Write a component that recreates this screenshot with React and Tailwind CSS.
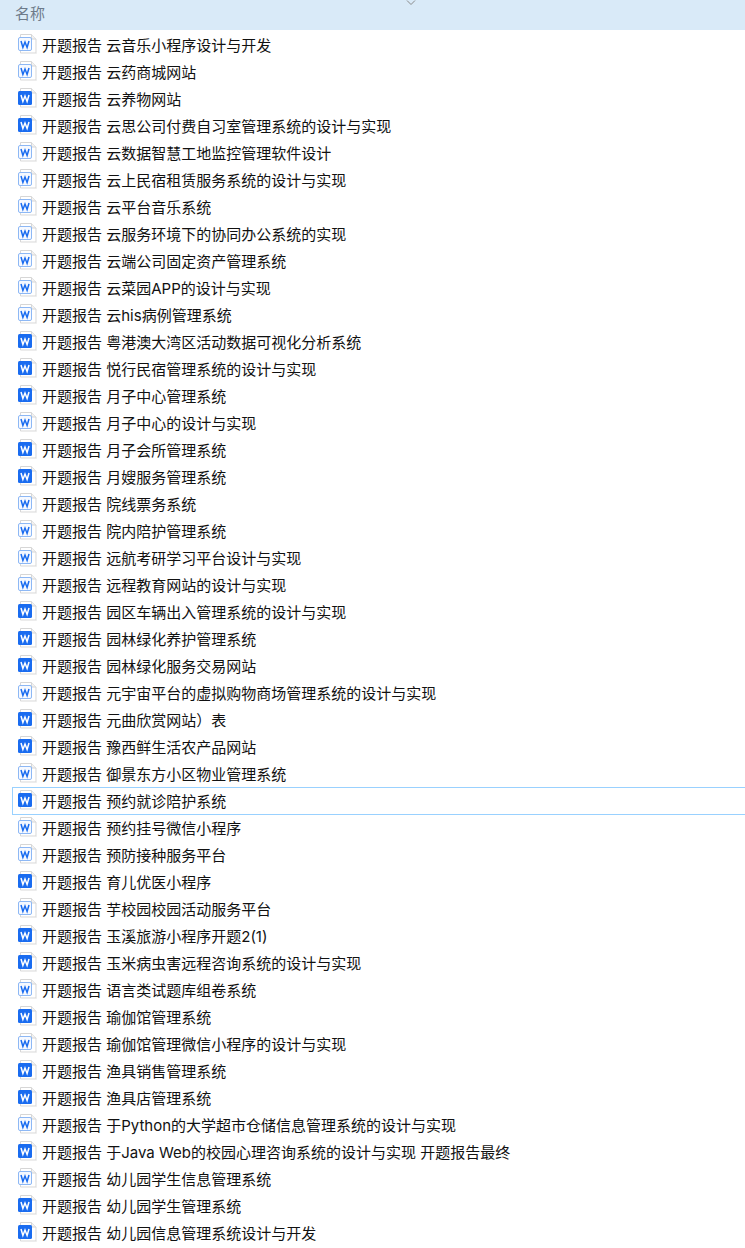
const files = [
  ["云音乐小程序设计与开发", 0],
  ["云药商城网站", 0],
  ["云养物网站", 1],
  ["云思公司付费自习室管理系统的设计与实现", 1],
  ["云数据智慧工地监控管理软件设计", 0],
  ["云上民宿租赁服务系统的设计与实现", 0],
  ["云平台音乐系统", 0],
  ["云服务环境下的协同办公系统的实现", 0],
  ["云端公司固定资产管理系统", 0],
  ["云菜园APP的设计与实现", 0],
  ["云his病例管理系统", 0],
  ["粤港澳大湾区活动数据可视化分析系统", 1],
  ["悦行民宿管理系统的设计与实现", 1],
  ["月子中心管理系统", 1],
  ["月子中心的设计与实现", 0],
  ["月子会所管理系统", 1],
  ["月嫂服务管理系统", 1],
  ["院线票务系统", 0],
  ["院内陪护管理系统", 0],
  ["远航考研学习平台设计与实现", 0],
  ["远程教育网站的设计与实现", 0],
  ["园区车辆出入管理系统的设计与实现", 1],
  ["园林绿化养护管理系统", 1],
  ["园林绿化服务交易网站", 1],
  ["元宇宙平台的虚拟购物商场管理系统的设计与实现", 0],
  ["元曲欣赏网站）表", 1],
  ["豫西鲜生活农产品网站", 1],
  ["御景东方小区物业管理系统", 0],
  ["预约就诊陪护系统", 1],
  ["预约挂号微信小程序", 0],
  ["预防接种服务平台", 0],
  ["育儿优医小程序", 1],
  ["芋校园校园活动服务平台", 0],
  ["玉溪旅游小程序开题2(1)", 1],
  ["玉米病虫害远程咨询系统的设计与实现", 1],
  ["语言类试题库组卷系统", 0],
  ["瑜伽馆管理系统", 1],
  ["瑜伽馆管理微信小程序的设计与实现", 0],
  ["渔具销售管理系统", 1],
  ["渔具店管理系统", 1],
  ["于Python的大学超市仓储信息管理系统的设计与实现", 0],
  ["于Java Web的校园心理咨询系统的设计与实现 开题报告最终", 1],
  ["幼儿园学生信息管理系统", 0],
  ["幼儿园学生管理系统", 1],
  ["幼儿园信息管理系统设计与开发", 1],
];

const SELECTED = 28;

function WordIcon({ solid }) {
  return (
    <svg width="20" height="22" viewBox="0 0 20 22" className="mt-px shrink-0">
      {/* page */}
      <path d="M2.5 1.5H13.5L18 6V20H2.5Z" fill="#fff" stroke="#d6d6d6" />
      <path d="M13.5 1.5V6H18" fill="#f2f2f2" stroke="#d6d6d6" />
      <path d="M3 20.5H18.5V7" fill="none" stroke="#ececec" />
      {/* badge */}
      {solid ? (
        <rect x="0" y="4" width="14" height="14" rx="1.5" fill="#1a6cf0" />
      ) : (
        <rect x="0.5" y="4.5" width="13" height="13" rx="1.5" fill="#f6f9ff" stroke="#8db8f5" />
      )}
      <path
        d="M3 8L4.9 14.5L7 9L9.1 14.5L11 8"
        fill="none"
        stroke={solid ? "#fff" : "#1a6cf0"}
        strokeWidth="1.5"
      />
    </svg>
  );
}

export default function App() {
  return (
    <div className="min-h-screen bg-white font-['Inter','Noto_Sans_CJK_SC',sans-serif] text-[15px] text-[#111]">
      <div className="relative flex h-[30px] items-center bg-[#d9eaf8] pb-px pl-[15px] text-[#6d7a8a]">
        名称
        <svg width="10" height="6" viewBox="0 0 10 6" className="absolute left-[406px] top-0">
          <path d="M1 0.5L5 4.5L9 0.5" fill="none" stroke="#8a8a8a" />
        </svg>
      </div>
      <ul className="pt-px">
        {files.map(([name, solid], i) => (
          <li
            key={name}
            className={`ml-3 flex items-start gap-[4px] pl-[5px] ${
              i === SELECTED
                ? "-mb-px h-[28px] border border-r-0 border-[#99d1ff]"
                : "h-[27px] border border-transparent"
            }`}
          >
            <WordIcon solid={solid === 1} />
            <span className="mt-[6px] whitespace-pre leading-none">开题报告 {name}</span>
          </li>
        ))}
      </ul>
    </div>
  );
}
